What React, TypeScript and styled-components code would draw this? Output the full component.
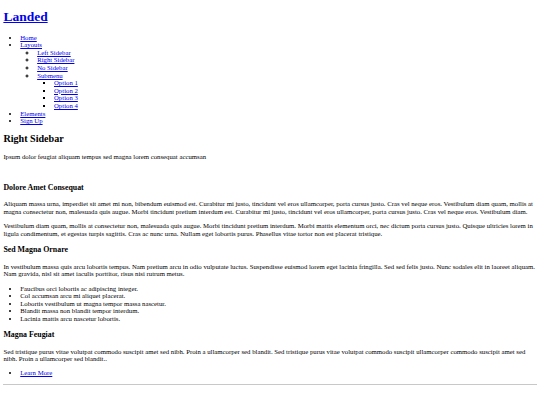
import React from 'react'
import styled, { createGlobalStyle } from 'styled-components'

// the page is an unstyled document photographed at 1280px and scaled to 540px
const S = 0.421875
const px = (v: number) => `${v * S}px`

const GlobalStyle = createGlobalStyle`
  html, body {
    background: #ffffff;
  }
  body {
    margin: 0;
    padding: 0 ${px(8)};
    font-family: "Liberation Serif", "Times New Roman", serif;
    font-size: ${px(16)};
    line-height: ${px(18)};
    color: #000000;
  }
`

const Logo = styled.h1`
  font-size: ${px(32)};
  line-height: ${px(37)};
  font-weight: bold;
  margin: ${px(21.44)} 0;
`

const Link = styled.a`
  color: #0000ee;
  text-decoration: underline;
`

const List = styled.ul<{ $nested?: boolean; $bullet?: string }>`
  list-style-type: ${p => p.$bullet || 'disc'};
  margin: ${p => (p.$nested ? '0' : `${px(16)} 0`)};
  padding-left: ${px(40)};
`

const Title = styled.h2`
  font-size: ${px(24)};
  line-height: ${px(28)};
  margin: ${px(19.92)} 0;
`

const Subtitle = styled.h3`
  font-size: ${px(18.72)};
  line-height: ${px(22)};
  margin: ${px(18.72)} 0;
`

const Text = styled.p`
  margin: ${px(16)} 0;
`

// empty picture link: its image is missing, only the line is left
const ImageLink = styled.a`
  display: block;
  height: ${px(18)};
`

const Rule = styled.hr`
  margin: ${px(8)} 0;
  border: 0;
  border-top: 1px solid #c8c8c8;
`

const App = () => (
  <>
    <GlobalStyle />
    <header>
      <Logo><Link href='#'>Landed</Link></Logo>
      <nav>
        <List>
          <li><Link href='#'>Home</Link></li>
          <li>
            <Link href='#'>Layouts</Link>
            <List $nested $bullet='circle'>
              <li><Link href='#'>Left Sidebar</Link></li>
              <li><Link href='#'>Right Sidebar</Link></li>
              <li><Link href='#'>No Sidebar</Link></li>
              <li>
                <Link href='#'>Submenu</Link>
                <List $nested $bullet='square'>
                  <li><Link href='#'>Option 1</Link></li>
                  <li><Link href='#'>Option 2</Link></li>
                  <li><Link href='#'>Option 3</Link></li>
                  <li><Link href='#'>Option 4</Link></li>
                </List>
              </li>
            </List>
          </li>
          <li><Link href='#'>Elements</Link></li>
          <li><Link href='#'>Sign Up</Link></li>
        </List>
      </nav>
    </header>
    <main>
      <header>
        <Title>Right Sidebar</Title>
        <Text>Ipsum dolor feugiat aliquam tempus sed magna lorem consequat accumsan</Text>
      </header>
      <section>
        <ImageLink href='#' />
        <Subtitle>Dolore Amet Consequat</Subtitle>
        <Text>
          Aliquam massa urna, imperdiet sit amet mi non, bibendum euismod est. Curabitur mi justo, tincidunt vel eros ullamcorper, porta cursus justo. Cras vel neque eros. Vestibulum diam quam, mollis at magna consectetur non, malesuada quis augue. Morbi tincidunt pretium interdum est. Curabitur mi justo, tincidunt vel eros ullamcorper, porta cursus justo. Cras vel neque eros. Vestibulum diam.
        </Text>
        <Text>
          Vestibulum diam quam, mollis at consectetur non, malesuada quis augue. Morbi tincidunt pretium interdum. Morbi mattis elementum orci, nec dictum porta cursus justo. Quisque ultricies lorem in ligula condimentum, et egestas turpis sagittis. Cras ac nunc urna. Nullam eget lobortis purus. Phasellus vitae tortor non est placerat tristique.
        </Text>
        <Subtitle>Sed Magna Ornare</Subtitle>
        <Text>
          In vestibulum massa quis arcu lobortis tempus. Nam pretium arcu in odio vulputate luctus. Suspendisse euismod lorem eget lacinia fringilla. Sed sed felis justo. Nunc sodales elit in laoreet aliquam. Nam gravida, nisl sit amet iaculis porttitor, risus nisi rutrum metus.
        </Text>
        <List>
          <li>Faucibus orci lobortis ac adipiscing integer.</li>
          <li>Col accumsan arcu mi aliquet placerat.</li>
          <li>Lobortis vestibulum ut magna tempor massa nascetur.</li>
          <li>Blandit massa non blandit tempor interdum.</li>
          <li>Lacinia mattis arcu nascetur lobortis.</li>
        </List>
      </section>
      <section>
        <Subtitle>Magna Feugiat</Subtitle>
        <Text>
          Sed tristique purus vitae volutpat commodo suscipit amet sed nibh. Proin a ullamcorper sed blandit. Sed tristique purus vitae volutpat commodo suscipit ullamcorper commodo suscipit amet sed nibh. Proin a ullamcorper sed blandit..
        </Text>
        <List>
          <li><Link href='#'>Learn More</Link></li>
        </List>
      </section>
      <Rule />
    </main>
  </>
)

export default App
